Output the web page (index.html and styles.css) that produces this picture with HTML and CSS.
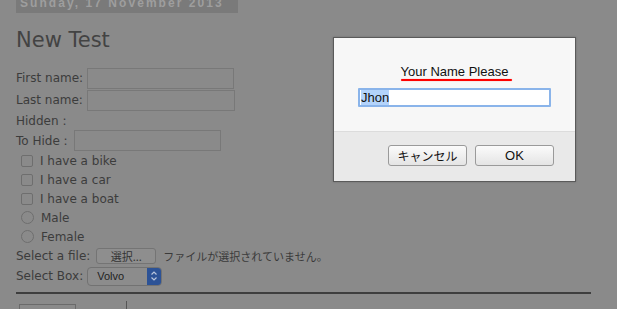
FILE: index.html
```html
<!DOCTYPE html>
<html>
<head>
<meta charset="utf-8">
<link rel="stylesheet" href="styles.css">
</head>
<body>
<div class="page">
  <div class="datebar"><span>Sunday, 17 November 2013</span></div>
  <h1 class="title">New Test</h1>
  <div class="form">
    <div class="row r22"><span class="lbl">First name:</span><span class="field w147"></span></div>
    <div class="row r22"><span class="lbl">Last name:</span><span class="field w148"></span></div>
    <div class="row r19"><span class="lbl">Hidden :</span></div>
    <div class="row r21"><span class="lbl">To Hide :</span><span class="field w147 hide"></span></div>
    <div class="row r19 opt"><span class="check"></span><span class="lbl">I have a bike</span></div>
    <div class="row r19 opt"><span class="check"></span><span class="lbl">I have a car</span></div>
    <div class="row r19 opt"><span class="check"></span><span class="lbl">I have a boat</span></div>
    <div class="row r19 opt"><span class="radio"></span><span class="lbl">Male</span></div>
    <div class="row r19 opt"><span class="radio"></span><span class="lbl">Female</span></div>
    <div class="row r20"><span class="lbl">Select a file:</span><span class="filebtn">選択...</span><span class="nofile">ファイルが選択されていません。</span></div>
    <div class="row r20"><span class="lbl">Select Box:</span><span class="select"><span class="selval">Volvo</span><span class="selarrow"><svg width="8" height="12" viewBox="0 0 8 12"><path d="M1.5 4.5 L4 2 L6.5 4.5 M1.5 7.5 L4 10 L6.5 7.5" fill="none" stroke="#b8c4dc" stroke-width="1.2"/></svg></span></span></div>
  </div>
  <div class="rule"></div>
  <div class="bottom"><span class="box"></span><span class="vline"></span></div>
</div>

<div class="dialog">
  <div class="dlg-body">
    <div class="dlg-title">Your Name Please</div>
    <div class="dlg-line"></div>
    <div class="dlg-input"><span class="sel">Jhon</span></div>
  </div>
  <div class="dlg-foot">
    <span class="btn cancel">キャンセル</span>
    <span class="btn ok">OK</span>
  </div>
</div>
</body>
</html>
```
FILE: styles.css
```css
html, body {
  margin: 0;
  padding: 0;
  background: #8a8a8a;
  width: 617px;
  height: 309px;
  overflow: hidden;
}
.page {
  padding-left: 16px;
  font-family: "DejaVu Sans", Verdana, sans-serif;
  color: #3c3c3c;
}
.datebar {
  width: 222px;
  height: 13px;
  background: #7a7a7a;
  overflow: hidden;
}
.datebar span {
  display: block;
  margin-top: -4px;
  padding-left: 4px;
  font-family: "Liberation Sans", Arial, sans-serif;
  font-weight: bold;
  font-size: 12px;
  letter-spacing: 2.05px;
  line-height: 15px;
  color: #9e9e9e;
  white-space: nowrap;
}
.title {
  margin: 13px 0 0 0;
  font-size: 21px;
  font-weight: normal;
  line-height: 28px;
  height: 28px;
  color: #434343;
}
.form {
  margin-top: 13px;
  display: flex;
  flex-direction: column;
  font-size: 12px;
}
.row {
  display: flex;
  align-items: center;
  white-space: nowrap;
}
.r22 { height: 22px; }
.r21 { height: 21px; }
.r20 { height: 20px; }
.r19 { height: 19px; }
.lbl { line-height: 14px; }
.field {
  margin-left: 4px;
  height: 19px;
  border: 1px solid #787878;
  box-sizing: content-box;
}
.field.hide { margin-left: 6px; }
.w147 { width: 145px; }
.w148 { width: 146px; }
.opt .lbl { margin-left: 7px; }
.check {
  margin-left: 5px;
  width: 10px;
  height: 10px;
  border: 1px solid #6e6e6e;
  border-radius: 2px;
}
.radio {
  margin-left: 5px;
  width: 11px;
  height: 11px;
  border: 1px solid #6e6e6e;
  border-radius: 50%;
}
.filebtn {
  margin-left: 6px;
  width: 58px;
  height: 14px;
  border: 1px solid #747474;
  border-radius: 3px;
  background: #8e8e8e;
  font-family: "Noto Sans CJK JP", sans-serif;
  font-size: 11px;
  line-height: 14px;
  text-align: center;
  color: #333;
}
.nofile {
  margin-left: 7px;
  font-family: "Noto Sans CJK JP", sans-serif;
  font-size: 11px;
  color: #3a3a3a;
}
.select {
  margin-left: 4px;
  display: flex;
  width: 73px;
  height: 17px;
  border: 1px solid #727272;
  border-radius: 4px;
  overflow: hidden;
  background: #8c8c8c;
}
.selval {
  flex: 1;
  padding-left: 9px;
  font-family: "Liberation Sans", Arial, sans-serif;
  font-size: 11px;
  line-height: 17px;
  color: #222;
}
.selarrow {
  width: 14px;
  background: #2c5296;
  display: flex;
  align-items: center;
  justify-content: center;
}
.rule {
  margin-top: 6px;
  width: 575px;
  height: 2px;
  background: #3e3e3e;
}
.bottom {
  display: flex;
  padding-top: 10px;
}
.box {
  margin-left: 3px;
  width: 55px;
  height: 20px;
  border: 1px solid #6a6a6a;
}
.vline {
  margin-left: 50px;
  margin-top: -3px;
  width: 1px;
  height: 20px;
  background: #555;
}

.dialog {
  position: absolute;
  left: 333px;
  top: 37px;
  width: 241px;
  height: 143px;
  border: 1px solid #5a5a5a;
  background: #e9e9e9;
  display: flex;
  flex-direction: column;
  font-family: "Liberation Sans", Arial, sans-serif;
  box-shadow: 0 0 2px rgba(0,0,0,0.2);
}
.dlg-body {
  height: 93px;
  background: #f7f7f7;
  border-bottom: 1px solid #dcdcdc;
  display: flex;
  flex-direction: column;
  align-items: center;
}
.dlg-title {
  margin-top: 26px;
  font-size: 13px;
  line-height: 15px;
  color: #111;
}
.dlg-line {
  margin-top: 0px;
  margin-left: 4px;
  width: 111px;
  height: 2px;
  background: #f00;
  border-radius: 1px;
  box-shadow: 0 0 1px #f66;
}
.dlg-input {
  margin-top: 7px;
  width: 189px;
  height: 15px;
  border: 2px solid #8ab4ea;
  border-radius: 1px;
  background: #fff;
  font-size: 13px;
  line-height: 15px;
  color: #111;
  box-sizing: content-box;
}
.sel {
  margin-left: 1px;
  background: #b3d3fb;
  display: inline-block;
}
.dlg-foot {
  flex: 1;
  display: flex;
  justify-content: flex-end;
  align-items: flex-start;
  padding-top: 13px;
  padding-right: 21px;
  gap: 8px;
}
.btn {
  height: 19px;
  border: 1px solid #9a9a9a;
  border-radius: 3px;
  background: linear-gradient(#fbfbfb, #e4e4e4);
  font-size: 13px;
  line-height: 19px;
  text-align: center;
  color: #111;
}
.cancel {
  width: 77px;
  font-family: "Noto Sans CJK JP", sans-serif;
  font-size: 12px;
}
.ok {
  width: 77px;
}
```
